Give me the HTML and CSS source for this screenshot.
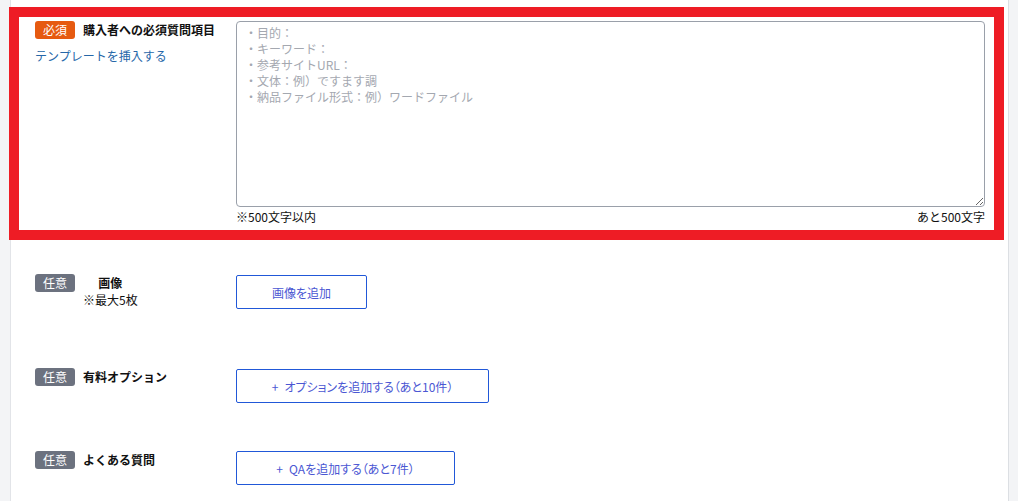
FILE: index.html
```html
<!DOCTYPE html>
<html lang="ja">
<head>
<meta charset="utf-8">
<title>購入者への必須質問項目</title>
<link rel="stylesheet" href="styles.css">
</head>
<body>
<div class="page">
  <section class="required-box">
    <div class="field-label">
      <div class="label-head">
        <span class="badge badge--required">必須</span>
        <span class="label-title">購入者への必須質問項目</span>
      </div>
      <a class="template-link" href="#">テンプレートを挿入する</a>
    </div>
    <div class="field-body">
      <textarea class="question-input" placeholder="・目的：&#10;・キーワード：&#10;・参考サイトURL：&#10;・文体：例）ですます調&#10;・納品ファイル形式：例）ワードファイル"></textarea>
      <div class="counter">
        <span>※500文字以内</span>
        <span>あと500文字</span>
      </div>
    </div>
  </section>

  <div class="row row--image">
    <div class="field-label">
      <div class="label-head">
        <span class="badge badge--optional">任意</span>
        <div class="label-stack">
          <span class="label-title">画像</span>
          <span class="label-note">※最大5枚</span>
        </div>
      </div>
    </div>
    <div class="field-body">
      <button class="add-btn add-btn--image" type="button">画像を追加</button>
    </div>
  </div>

  <div class="row row--option">
    <div class="field-label">
      <div class="label-head">
        <span class="badge badge--optional">任意</span>
        <span class="label-title">有料オプション</span>
      </div>
    </div>
    <div class="field-body">
      <button class="add-btn add-btn--option" type="button"><span class="plus">+</span>オプションを追加する（あと10件）</button>
    </div>
  </div>

  <div class="row row--qa">
    <div class="field-label">
      <div class="label-head">
        <span class="badge badge--optional">任意</span>
        <span class="label-title">よくある質問</span>
      </div>
    </div>
    <div class="field-body">
      <button class="add-btn add-btn--qa" type="button"><span class="plus">+</span>QAを追加する（あと7件）</button>
    </div>
  </div>
</div>
</body>
</html>
```

FILE: styles.css
```css
* { box-sizing: border-box; }

html, body {
  margin: 0;
  padding: 0;
  height: 100%;
  overflow: hidden;
}

body {
  background: #f3f4f6;
  font-family: "Noto Sans CJK JP", "Noto Sans", sans-serif;
  font-size: 12px;
  color: #111;
}

.page {
  margin-left: 10px;
  width: 999px;
  min-height: 100%;
  background: #fff;
  border-left: 1px solid #e2e4e8;
  border-right: 1px solid #dcdfe3;
  padding-top: 7px;
  padding-bottom: 20px;
}

.required-box {
  display: flex;
  margin: 0 4px 0 -2px;
  border: 10px solid #ee1c25;
  padding: 4px 9px 4px 16px;
  background: #fff;
}

.field-label {
  width: 201px;
  flex: none;
}

.label-head {
  display: flex;
  align-items: flex-start;
  gap: 8px;
}

.badge {
  flex: none;
  display: inline-block;
  width: 40px;
  height: 18px;
  line-height: 18px;
  text-align: center;
  color: #fff;
  border-radius: 3px;
  font-size: 12px;
}

.badge--required { background: #e65a10; }
.badge--optional { background: #6c727f; }

.label-title {
  font-weight: bold;
  line-height: 18px;
  color: #111;
}

.label-stack {
  display: flex;
  flex-direction: column;
  align-items: center;
  line-height: 17px;
}

.label-stack .label-title { line-height: 17px; }

.label-note { color: #111; }

.template-link {
  display: block;
  margin-top: 9px;
  color: #2667a8;
  text-decoration: none;
  line-height: 16px;
}

.field-body {
  flex: 1;
  min-width: 0;
}

.question-input {
  display: block;
  width: 100%;
  height: 186px;
  margin: 0;
  padding: 3px 8px;
  border: 1px solid #9aa0aa;
  border-radius: 4px;
  font-family: inherit;
  font-size: 12px;
  line-height: 16px;
  color: #111;
  resize: vertical;
}

.question-input::placeholder { color: #a4a8b0; }

.counter {
  display: flex;
  justify-content: space-between;
  line-height: 18px;
  padding-top: 1px;
  color: #111;
}

.row {
  display: flex;
  padding: 0 24px;
}

.row--image { margin-top: 34px; }
.row--option { margin-top: 59px; }
.row--qa { margin-top: 48px; }

.add-btn {
  height: 34px;
  margin-top: 1px;
  padding: 0;
  background: #fff;
  border: 1px solid #2158d8;
  border-radius: 2px;
  font-family: inherit;
  font-size: 12px;
  font-feature-settings: "palt";
  color: #4b57d3;
  text-align: center;
  cursor: pointer;
}

.row--qa .add-btn { margin-top: 0; }

.add-btn--image { width: 131px; }
.add-btn--option { width: 253px; }
.add-btn--qa { width: 219px; }

.plus { margin-right: 6px; }
```
